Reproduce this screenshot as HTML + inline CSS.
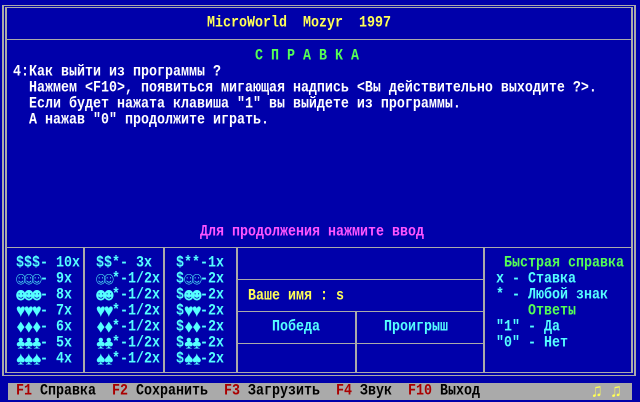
<!DOCTYPE html>
<html><head><meta charset="utf-8">
<style>
html,body{margin:0;padding:0}
body{width:640px;height:400px;background:#0000aa;position:relative;overflow:hidden;font-family:"Liberation Mono","DejaVu Sans Mono",monospace;font-size:13.33px;font-weight:bold}
.t{position:absolute;white-space:pre;line-height:16px;height:16px;transform:scaleY(1.15);transform-origin:0 50%}
.l{position:absolute;background:#aaaaaa}
.c{color:#55ffff}.y{color:#ffff55}.g{color:#55ff55}.w{color:#ffffff}.m{color:#ff55ff}
.r{color:#aa0000}.k{color:#000}
.s{display:inline-block;width:8px;font-size:16px;text-align:center;overflow:visible;line-height:16px;vertical-align:top}
</style></head><body>
<div class="l" style="left:2px;top:5px;width:634px;height:1px"></div>
<div class="l" style="left:2px;top:375px;width:634px;height:1px"></div>
<div class="l" style="left:2px;top:5px;width:2px;height:371px"></div>
<div class="l" style="left:634px;top:5px;width:2px;height:371px"></div>
<div class="l" style="left:5px;top:7px;width:628px;height:1px"></div>
<div class="l" style="left:5px;top:372px;width:628px;height:1px"></div>
<div class="l" style="left:5px;top:7px;width:2px;height:366px"></div>
<div class="l" style="left:631px;top:7px;width:2px;height:366px"></div>
<div class="l" style="left:5px;top:39px;width:628px;height:1px"></div>
<div class="l" style="left:5px;top:247px;width:628px;height:1px"></div>
<div class="l" style="left:83px;top:247px;width:2px;height:126px"></div>
<div class="l" style="left:163px;top:247px;width:2px;height:126px"></div>
<div class="l" style="left:236px;top:247px;width:2px;height:126px"></div>
<div class="l" style="left:483px;top:247px;width:2px;height:126px"></div>
<div class="l" style="left:236px;top:279px;width:248px;height:1px"></div>
<div class="l" style="left:236px;top:311px;width:248px;height:1px"></div>
<div class="l" style="left:236px;top:343px;width:248px;height:1px"></div>
<div class="l" style="left:355px;top:311px;width:2px;height:62px"></div>

<div class="t y" style="left:207px;top:16px">MicroWorld  Mozyr  1997</div>
<div class="t g" style="left:255px;top:49px">С П Р А В К А</div>
<div class="t w" style="left:13px;top:65px">4:Как выйти из программы ?</div>
<div class="t w" style="left:29px;top:81px">Нажмем &lt;F10&gt;, появиться мигающая надпись &lt;Вы действительно выходите ?&gt;.</div>
<div class="t w" style="left:29px;top:97px">Если будет нажата клавиша "1" вы выйдете из программы.</div>
<div class="t w" style="left:29px;top:113px">А нажав "0" продолжите играть.</div>
<div class="t m" style="left:200px;top:225px">Для продолжения нажмите ввод</div>

<div class="t c" style="left:16px;top:256px">$$$- 10x</div>
<div class="t c" style="left:16px;top:272px"><span class="s">☺</span><span class="s">☺</span><span class="s">☺</span>- 9x</div>
<div class="t c" style="left:16px;top:288px"><span class="s">☻</span><span class="s">☻</span><span class="s">☻</span>- 8x</div>
<div class="t c" style="left:16px;top:304px"><span class="s">♥</span><span class="s">♥</span><span class="s">♥</span>- 7x</div>
<div class="t c" style="left:16px;top:320px"><span class="s">♦</span><span class="s">♦</span><span class="s">♦</span>- 6x</div>
<div class="t c" style="left:16px;top:336px"><span class="s">♣</span><span class="s">♣</span><span class="s">♣</span>- 5x</div>
<div class="t c" style="left:16px;top:352px"><span class="s">♠</span><span class="s">♠</span><span class="s">♠</span>- 4x</div>

<div class="t c" style="left:96px;top:256px">$$*- 3x</div>
<div class="t c" style="left:96px;top:272px"><span class="s">☺</span><span class="s">☺</span>*-1/2x</div>
<div class="t c" style="left:96px;top:288px"><span class="s">☻</span><span class="s">☻</span>*-1/2x</div>
<div class="t c" style="left:96px;top:304px"><span class="s">♥</span><span class="s">♥</span>*-1/2x</div>
<div class="t c" style="left:96px;top:320px"><span class="s">♦</span><span class="s">♦</span>*-1/2x</div>
<div class="t c" style="left:96px;top:336px"><span class="s">♣</span><span class="s">♣</span>*-1/2x</div>
<div class="t c" style="left:96px;top:352px"><span class="s">♠</span><span class="s">♠</span>*-1/2x</div>

<div class="t c" style="left:176px;top:256px">$**-1x</div>
<div class="t c" style="left:176px;top:272px">$<span class="s">☺</span><span class="s">☺</span>-2x</div>
<div class="t c" style="left:176px;top:288px">$<span class="s">☻</span><span class="s">☻</span>-2x</div>
<div class="t c" style="left:176px;top:304px">$<span class="s">♥</span><span class="s">♥</span>-2x</div>
<div class="t c" style="left:176px;top:320px">$<span class="s">♦</span><span class="s">♦</span>-2x</div>
<div class="t c" style="left:176px;top:336px">$<span class="s">♣</span><span class="s">♣</span>-2x</div>
<div class="t c" style="left:176px;top:352px">$<span class="s">♠</span><span class="s">♠</span>-2x</div>

<div class="t y" style="left:248px;top:289px">Ваше имя : s</div>
<div class="t c" style="left:272px;top:320px">Победа</div>
<div class="t c" style="left:384px;top:320px">Проигрыш</div>

<div class="t g" style="left:504px;top:256px">Быстрая справка</div>
<div class="t c" style="left:496px;top:272px">x - Ставка</div>
<div class="t c" style="left:496px;top:288px">* - Любой знак</div>
<div class="t g" style="left:528px;top:304px">Ответы</div>
<div class="t c" style="left:496px;top:320px">"1" - Да</div>
<div class="t c" style="left:496px;top:336px">"0" - Нет</div>

<div style="position:absolute;left:8px;top:383px;width:624px;height:17px;background:#aaaaaa"></div>
<div class="t k" style="left:16px;top:384px"><span class="r">F1</span> Справка  <span class="r">F2</span> Сохранить  <span class="r">F3</span> Загрузить  <span class="r">F4</span> Звук  <span class="r">F10</span> Выход</div>
<div class="t" style="left:592px;top:384px;color:#ffff55;font-size:16px">♫ ♫</div>
</body></html>
